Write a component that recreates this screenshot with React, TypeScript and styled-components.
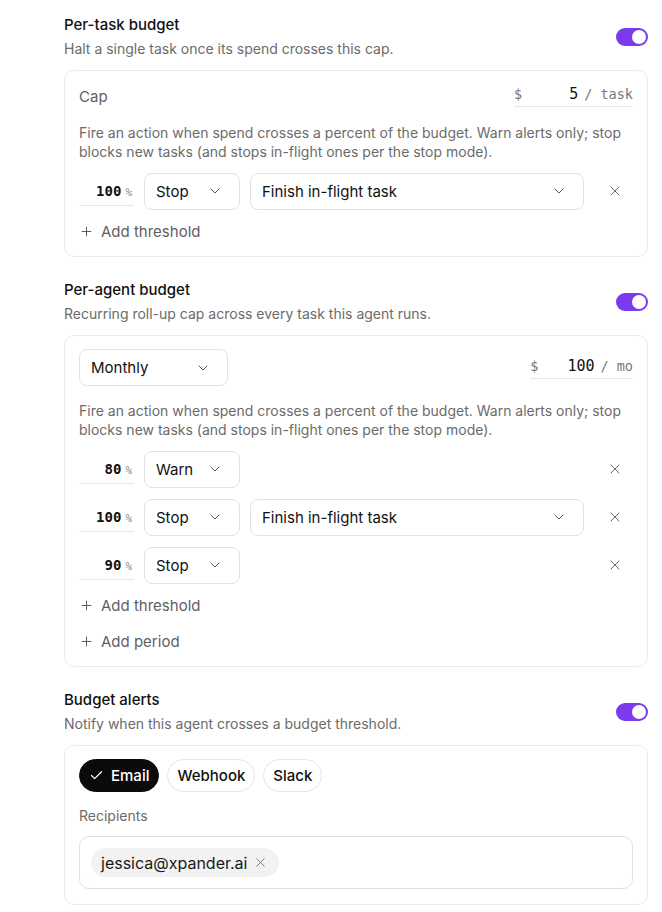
import { createGlobalStyle } from 'styled-components';
import styled from 'styled-components';
import { Check, ChevronDown, Plus, X } from 'lucide-react';

const GlobalStyle = createGlobalStyle`
  body {
    margin: 0;
    background: #ffffff;
    font-family: Inter, 'Noto Sans', sans-serif;
    color: #111111;
  }
`;

type Threshold = { pct: number; action: 'Warn' | 'Stop'; mode?: string };

const taskThresholds: Threshold[] = [{ pct: 100, action: 'Stop', mode: 'Finish in-flight task' }];
const agentThresholds: Threshold[] = [
  { pct: 80, action: 'Warn' },
  { pct: 100, action: 'Stop', mode: 'Finish in-flight task' },
  { pct: 90, action: 'Stop' },
];

const FIRE_TEXT =
  'Fire an action when spend crosses a percent of the budget. Warn alerts only; stop blocks new tasks (and stops in-flight ones per the stop mode).';

const Toggle = () => (
  <Switch>
    <Knob />
  </Switch>
);

const SectionHeader = ({ title, sub }: { title: string; sub: string }) => (
  <Header>
    <div>
      <Title>{title}</Title>
      <Sub>{sub}</Sub>
    </div>
    <Toggle />
  </Header>
);

const Select = ({ label, width }: { label: string; width?: number }) => (
  <SelectBox $width={width}>
    <span>{label}</span>
    <ChevronDown size={16} strokeWidth={1.5} color="#555" />
  </SelectBox>
);

const ThresholdRow = ({ t }: { t: Threshold }) => (
  <Row>
    <PctField>
      <PctValue>{t.pct}</PctValue>
      <PctSign>%</PctSign>
    </PctField>
    <Select label={t.action} width={96} />
    {t.mode ? <Select label={t.mode} /> : <Spacer />}
    <IconButton>
      <X size={16} strokeWidth={1.5} color="#6b6b6b" />
    </IconButton>
  </Row>
);

const AddLink = ({ children }: { children: string }) => (
  <AddButton>
    <Plus size={15} strokeWidth={1.5} color="#555" />
    {children}
  </AddButton>
);

const Amount = ({ value, unit }: { value: string; unit: string }) => (
  <AmountField>
    <Dollar>$</Dollar>
    <AmountValue>{value}</AmountValue>
    <Unit>/ {unit}</Unit>
  </AmountField>
);

const App = () => (
  <Page>
    <GlobalStyle />
    <Section>
      <SectionHeader title="Per-task budget" sub="Halt a single task once its spend crosses this cap." />
      <Card>
        <TopRow>
          <Label>Cap</Label>
          <Amount value="5" unit="task" />
        </TopRow>
        <Desc>{FIRE_TEXT}</Desc>
        {taskThresholds.map((t, i) => (
          <ThresholdRow key={i} t={t} />
        ))}
        <AddLink>Add threshold</AddLink>
      </Card>
    </Section>

    <Section>
      <SectionHeader title="Per-agent budget" sub="Recurring roll-up cap across every task this agent runs." />
      <Card>
        <TopRow>
          <Select label="Monthly" width={149} />
          <Amount value="100" unit="mo" />
        </TopRow>
        <Desc>{FIRE_TEXT}</Desc>
        {agentThresholds.map((t, i) => (
          <ThresholdRow key={i} t={t} />
        ))}
        <AddLink>Add threshold</AddLink>
        <AddLink>Add period</AddLink>
      </Card>
    </Section>

    <Section>
      <SectionHeader title="Budget alerts" sub="Notify when this agent crosses a budget threshold." />
      <Card>
        <Pills>
          <Pill $active>
            <Check size={15} strokeWidth={2} color="#fff" />
            Email
          </Pill>
          <Pill>Webhook</Pill>
          <Pill>Slack</Pill>
        </Pills>
        <RecipientsLabel>Recipients</RecipientsLabel>
        <RecipientsBox>
          <Chip>
            jessica@xpander.ai
            <X size={15} strokeWidth={1.5} color="#777" />
          </Chip>
        </RecipientsBox>
      </Card>
    </Section>
  </Page>
);

export default App;

const Page = styled.div`
  padding: 15px 14px 0 64px;
  display: flex;
  flex-direction: column;
  gap: 23px;
`;

const Section = styled.section`
  display: flex;
  flex-direction: column;
  gap: 11px;
`;

const Header = styled.div`
  display: flex;
  align-items: center;
  justify-content: space-between;
`;

const Title = styled.div`
  font-size: 15px;
  font-weight: 500;
  line-height: 20px;
  color: #111;
`;

const Sub = styled.div`
  margin-top: 4px;
  font-size: 14px;
  line-height: 20px;
  color: #6b6b6b;
`;

const Switch = styled.div`
  width: 32px;
  height: 18px;
  border-radius: 9px;
  background: #7c3aed;
  display: flex;
  align-items: center;
  justify-content: flex-end;
  padding: 0 2px;
  box-sizing: border-box;
`;

const Knob = styled.div`
  width: 14px;
  height: 14px;
  border-radius: 50%;
  background: #fff;
`;

const Card = styled.div`
  border: 1px solid #ebebeb;
  border-radius: 10px;
  padding: 13px 14px 15px;
  display: flex;
  flex-direction: column;
  gap: 12px;
`;

const TopRow = styled.div`
  display: flex;
  align-items: center;
  justify-content: space-between;
  min-height: 24px;
`;

const Label = styled.div`
  font-size: 15px;
  color: #5f5f5f;
`;

const AmountField = styled.div`
  display: flex;
  align-items: baseline;
  border-bottom: 1px solid #e6e6e6;
  padding-bottom: 3px;
  font-family: 'DejaVu Sans Mono', 'Liberation Mono', monospace;
`;

const Dollar = styled.span`
  font-size: 13.5px;
  color: #777;
`;

const AmountValue = styled.span`
  width: 56px;
  text-align: right;
  font-size: 15px;
  color: #111;
  margin-right: 6px;
`;

const Unit = styled.span`
  font-size: 13.5px;
  color: #777;
`;

const Desc = styled.p`
  margin: 3px 0 0;
  font-size: 14px;
  line-height: 19px;
  color: #6b6b6b;
`;

const Row = styled.div`
  display: flex;
  align-items: center;
  gap: 10px;
  height: 36px;
`;

const PctField = styled.div`
  width: 55px;
  flex-shrink: 0;
  display: flex;
  align-items: baseline;
  justify-content: flex-end;
  gap: 4px;
  padding: 0 2px 6px 0;
  margin-top: 6px;
  border-bottom: 1px solid #e6e6e6;
  box-sizing: border-box;
  font-family: 'DejaVu Sans Mono', 'Liberation Mono', monospace;
`;

const PctValue = styled.span`
  font-size: 14px;
  font-weight: 600;
  color: #111;
`;

const PctSign = styled.span`
  font-size: 11px;
  color: #888;
`;

const SelectBox = styled.div<{ $width?: number }>`
  ${(p) => (p.$width ? `width: ${p.$width}px; flex-shrink: 0;` : 'flex: 1;')}
  height: 37px;
  box-sizing: border-box;
  border: 1px solid #e2e2e2;
  border-radius: 8px;
  padding: 0 16px 0 11px;
  display: flex;
  align-items: center;
  justify-content: space-between;
  font-size: 15px;
  color: #111;
`;

const Spacer = styled.div`
  flex: 1;
`;

const IconButton = styled.div`
  width: 36px;
  height: 36px;
  margin-left: 3px;
  flex-shrink: 0;
  display: flex;
  align-items: center;
  justify-content: center;
`;

const AddButton = styled.div`
  display: flex;
  align-items: center;
  gap: 7px;
  height: 20px;
  font-size: 15px;
  color: #5f5f5f;

  & + & {
    margin-top: 4px;
  }
`;

const Pills = styled.div`
  display: flex;
  gap: 8px;
`;

const Pill = styled.div<{ $active?: boolean }>`
  height: 33px;
  box-sizing: border-box;
  display: flex;
  align-items: center;
  gap: 7px;
  padding: 0 9px;
  border-radius: 17px;
  font-size: 15px;
  font-weight: 500;
  border: 1px solid ${(p) => (p.$active ? '#0b0b0b' : '#e6e6e6')};
  background: ${(p) => (p.$active ? '#0b0b0b' : '#fff')};
  color: ${(p) => (p.$active ? '#fff' : '#111')};
`;

const RecipientsLabel = styled.div`
  margin-top: 2px;
  font-size: 14px;
  line-height: 20px;
  color: #6b6b6b;
`;

const RecipientsBox = styled.div`
  margin-top: -2px;
  height: 53px;
  box-sizing: border-box;
  border: 1px solid #e0e0e0;
  border-radius: 10px;
  padding: 0 11px;
  display: flex;
  align-items: center;
`;

const Chip = styled.div`
  display: flex;
  align-items: center;
  gap: 6px;
  height: 29px;
  padding: 0 11px 0 10px;
  border-radius: 15px;
  background: #f2f2f2;
  font-size: 16px;
  color: #1a1a1a;
`;
